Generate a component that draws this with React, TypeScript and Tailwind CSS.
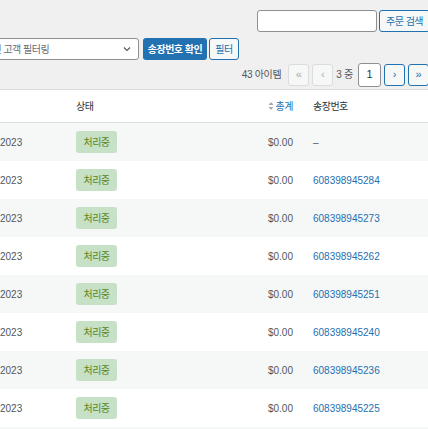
import React from "react";

const invoices = [
  "–",
  "608398945284",
  "608398945273",
  "608398945262",
  "608398945251",
  "608398945240",
  "608398945236",
  "608398945225",
  "608398945214",
];

function Chevron() {
  return (
    <svg width="10" height="10" viewBox="0 0 10 10" className="text-[#50575e]">
      <path d="M2 3.5 L5 6.5 L8 3.5" fill="none" stroke="currentColor" strokeWidth="1.1" />
    </svg>
  );
}

function SortIcon() {
  return (
    <svg width="6" height="10" viewBox="0 0 6 10" className="mr-[2px]">
      <path d="M3 1 L5.5 4 H0.5 Z" fill="#a7aaad" />
      <path d="M3 9 L5.5 6 H0.5 Z" fill="#a7aaad" />
    </svg>
  );
}

function PageButton({ label, disabled }: { label: string; disabled?: boolean }) {
  return (
    <span
      className={`flex h-[22px] w-[21px] items-center justify-center rounded-[3px] border text-[11px] ${
        disabled
          ? "border-[#dcdcde] bg-[#f6f7f7] text-[#a7aaad]"
          : "border-[#2271b1] bg-[#f6f7f7] text-[#2271b1]"
      }`}
    >
      {label}
    </span>
  );
}

export default function App() {
  return (
    <div className="h-[429px] w-[428px] overflow-hidden bg-[#f0f0f1] font-[family-name:'Liberation_Sans','Noto_Sans_CJK_KR',sans-serif] text-[10px] text-[#50575e]">
      <div className="w-[430px]">
        {/* search */}
        <div className="flex justify-end gap-[2px] pt-[10px]">
          <input className="h-[22px] w-[120px] rounded-[3px] border border-[#8c8f94] bg-white" />
          <button className="h-[22px] w-[51px] rounded-[3px] border border-[#2271b1] bg-[#f6f7f7] text-[#2271b1] tracking-[-0.5px]">
            주문 검색
          </button>
        </div>

        {/* filters */}
        <div className="mt-[6px] flex items-center">
          <div className="-ml-[34px] flex h-[22px] w-[173px] items-center justify-between rounded-[3px] border border-[#8c8f94] bg-white pl-[8px] pr-[6px] text-[#646970]">
            <span className="tracking-[-0.5px]">등록된 고객 필터링</span>
            <Chevron />
          </div>
          <button className="ml-[4px] h-[22px] w-[64px] rounded-[3px] bg-[#2271b1] font-semibold text-white tracking-[-0.5px]">
            송장번호 확인
          </button>
          <button className="ml-[2px] h-[22px] w-[30px] rounded-[3px] border border-[#2271b1] bg-[#f6f7f7] text-[#2271b1] tracking-[-0.5px]">
            필터
          </button>
        </div>

        {/* pagination */}
        <div className="flex h-[29px] items-center justify-end pr-[1px] text-[#50575e]">
          <span className="mr-[7px] tracking-[-0.3px]">43 아이템</span>
          <PageButton label="«" disabled />
          <span className="w-[3px]" />
          <PageButton label="‹" disabled />
          <span className="ml-[3px] mr-[5px] tracking-[-0.3px]">3 중</span>
          <span className="flex h-[24px] w-[23px] items-center justify-center rounded-[3px] border border-[#8c8f94] bg-white text-[11px] text-[#2c3338]">
            1
          </span>
          <span className="w-[3px]" />
          <PageButton label="›" />
          <span className="w-[3px]" />
          <PageButton label="»" />
        </div>
      </div>

      {/* orders table */}
      <div className="border-t border-[#dcdcde] bg-white">
        <div className="flex h-[33px] items-center border-b border-[#dcdcde] text-[#2c3338]">
          <div className="w-[76px]" />
          <div className="w-[174px] tracking-[-0.5px]">상태</div>
          <div className="flex w-[43px] items-center justify-end text-[#2271b1] tracking-[-0.5px]">
            <SortIcon />
            총계
          </div>
          <div className="pl-[20px] tracking-[-0.5px]">송장번호</div>
        </div>
        {invoices.map((inv, i) => (
          <div
            key={i}
            className={`flex h-[38px] items-center ${i % 2 === 0 ? "bg-[#f6f7f7]" : "bg-white"}`}
          >
            <div className="w-[76px]">2023</div>
            <div className="w-[174px]">
              <span className="flex h-[22px] w-[41px] items-center justify-center rounded-[3px] bg-[#c6e1c6] text-[#5b841b] tracking-[-0.5px]">
                처리중
              </span>
            </div>
            <div className="w-[43px] text-right">$0.00</div>
            <div className={`pl-[20px] ${inv === "–" ? "text-[#50575e]" : "text-[#2271b1]"}`}>{inv}</div>
          </div>
        ))}
      </div>
    </div>
  );
}
